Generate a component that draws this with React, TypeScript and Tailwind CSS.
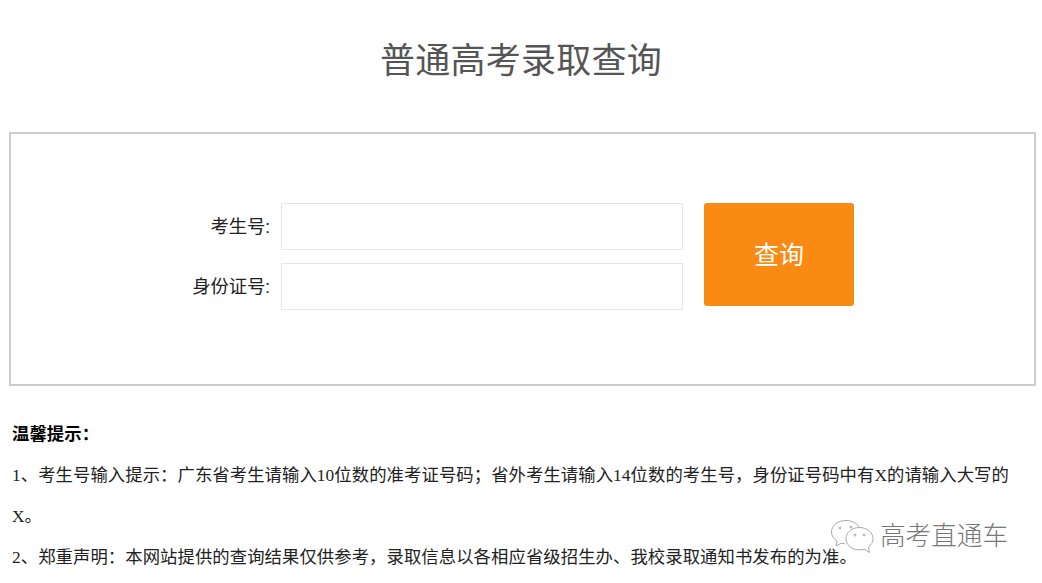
const sans = { fontFamily: '"Liberation Sans", "Noto Sans CJK SC", sans-serif' };

function Field({ label }: { label: string }) {
  return (
    <div className="flex items-center">
      <label className="w-[129px] pr-[11px] text-right text-[18.4px] tracking-[-0.2px] text-[#222]">{label}</label>
      <input className="h-[47px] w-[402px] border border-[#e6e6e6] bg-white outline-none" />
    </div>
  );
}

function WechatMark() {
  return (
    <svg width="44" height="36" viewBox="0 0 44 36" fill="none" stroke="#a8a8a8" strokeWidth="1">
      <path d="M16 1.5C8 1.5 1.5 6.5 1.5 13c0 3.800 2.200 7 5.500 9.200L6 27l5.200-2.800c1.300.3 2.300.5 3.800.5" fill="#fff" />
      <path d="M16 1.500c6.200 0 11.500 3 13.500 7.500" />
      <path d="M29.500 8.500c-7.500 0-13.500 5-13.500 11.200s6 11.200 13.500 11.200c1.700 0 3.200-.2 4.700-.7l5.300 3.300-1.200-5.300c2.900-2 4.700-5 4.700-8.500 0-6.200-6-11.200-13.500-11.200z" fill="#fff" />
      <circle cx="10" cy="9" r="1" />
      <circle cx="21" cy="8" r="1" />
      <circle cx="25" cy="16" r="1" />
      <circle cx="34" cy="16" r="1" />
    </svg>
  );
}

export default function App() {
  return (
    <div className="relative h-[583px] w-[1042px] overflow-hidden bg-white" style={sans}>
      <h1 className="flex h-[132px] items-center justify-center pb-[10px] text-[35px] font-normal tracking-[0.25px] text-[#555]">
        普通高考录取查询
      </h1>

      <div className="mx-[9px] flex h-[254px] w-[1027px] items-start border-2 border-[#cccccc] pt-[69px]">
        <div className="ml-[141px] flex flex-col gap-[13px]">
          <Field label="考生号:" />
          <Field label="身份证号:" />
        </div>
        <button className="ml-[21px] h-[103px] w-[150px] rounded-[3px] bg-[#f98a14] pt-[2px] text-[25px] text-white">
          查询
        </button>
      </div>

      <div
        className="mt-[28px] pl-[12px] pr-[6px] text-[17.33px] leading-[41px] tracking-[0.09px] text-[#222]"
        style={{ fontFamily: '"Liberation Serif", "Noto Sans CJK SC", serif' }}
      >
        <p className="font-bold text-black">温馨提示：</p>
        <p>1、考生号输入提示：广东省考生请输入10位数的准考证号码；省外考生请输入14位数的考生号，身份证号码中有X的请输入大写的X。</p>
        <p>2、郑重声明：本网站提供的查询结果仅供参考，录取信息以各相应省级招生办、我校录取通知书发布的为准。</p>
      </div>

      <div className="absolute left-[830px] top-[519px] flex items-center gap-[6px]">
        <WechatMark />
        <span className="text-[25.6px] font-light leading-none text-[#777]">高考直通车</span>
      </div>
    </div>
  );
}
